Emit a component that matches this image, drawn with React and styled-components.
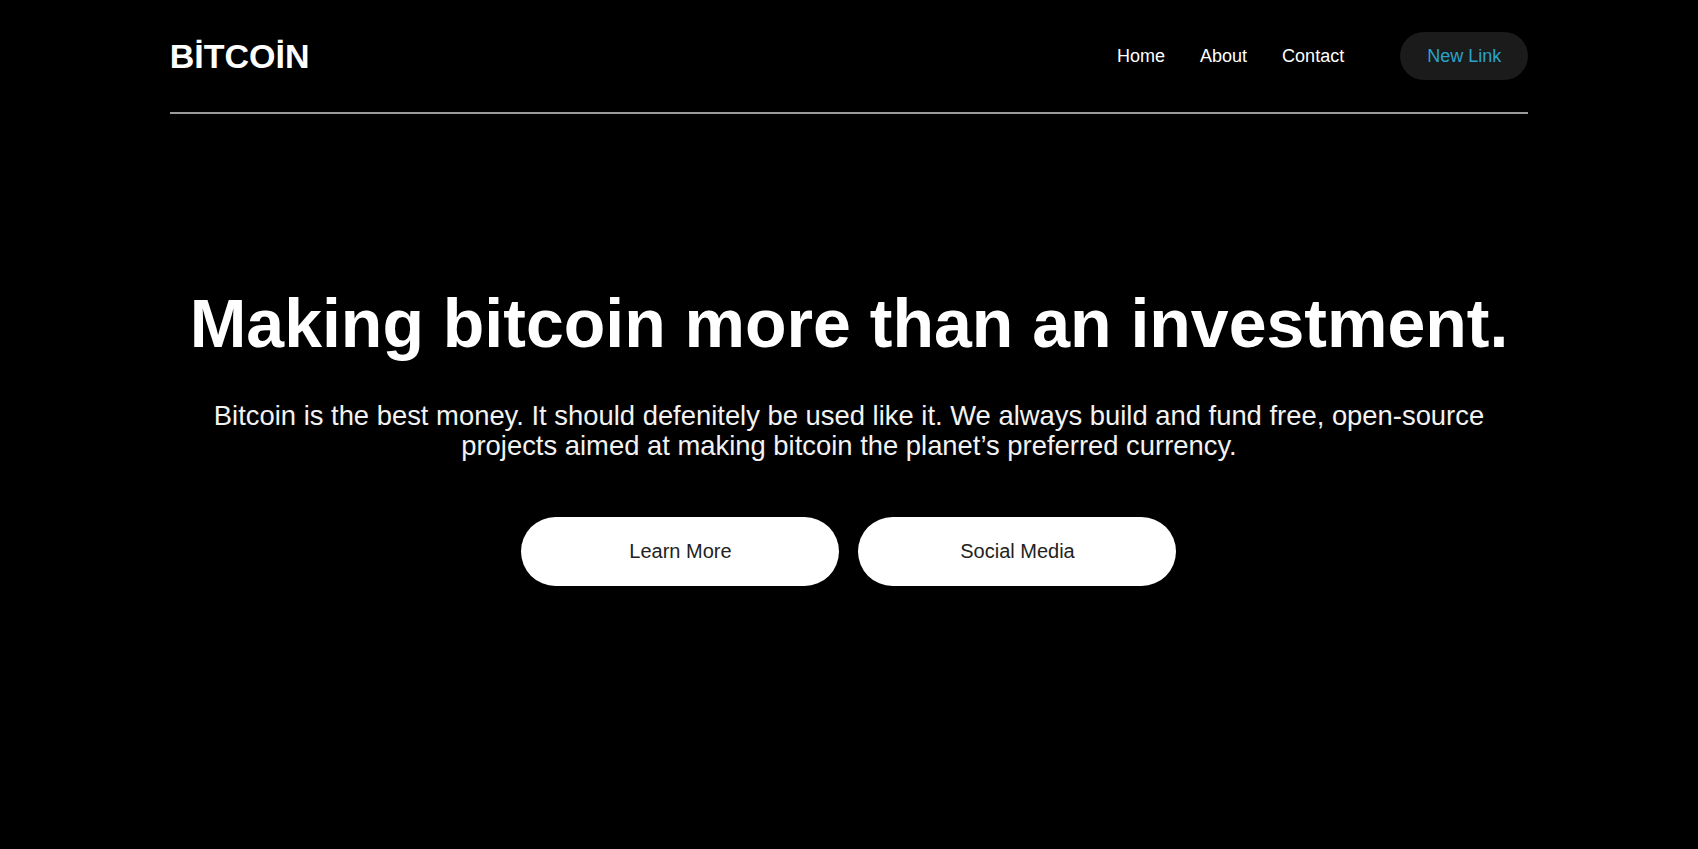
import React from 'react'
import styled, { createGlobalStyle } from 'styled-components'

const GlobalStyle = createGlobalStyle`
  html, body {
    margin: 0;
    padding: 0;
    background: #000;
    font-family: "Liberation Sans", Arial, sans-serif;
    color: #fff;
  }
`

const Page = styled.div`
  min-height: 100vh;
  background: #000;
`
const Container = styled.div`
  width: 80%;
  margin: 0 auto;
`
const HeaderBar = styled.header`
  display: flex;
  justify-content: space-between;
  align-items: center;
  padding: 32px 0;
  border-bottom: 2px solid #9a9a9a;
`
const Logo = styled.a`
  font-size: 34px;
  font-weight: 700;
  color: #fff;
  text-decoration: none;
  line-height: 1;
`
const Nav = styled.nav`
  display: flex;
  align-items: center;
`
const NavList = styled.ul`
  display: flex;
  gap: 35px;
  list-style: none;
  margin: 0;
  padding: 0;
`
const NavLink = styled.a`
  font-size: 18px;
  color: #fff;
  text-decoration: none;
`
const PillLink = styled.a`
  display: flex;
  align-items: center;
  height: 48px;
  padding: 0 27px;
  margin-left: 56px;
  border-radius: 24px;
  background: #1b1b1b;
  color: #2aa3cc;
  font-size: 18px;
  text-decoration: none;
`
const Hero = styled.section`
  display: flex;
  flex-direction: column;
  align-items: center;
  text-align: center;
  padding-top: 170px;
`
const Title = styled.h1`
  margin: 0;
  font-size: 68px;
  font-weight: 700;
  line-height: 78px;
`
const Lead = styled.p`
  margin: 39px 0 0;
  max-width: 1320px;
  font-size: 27.4px;
  line-height: 30px;
  color: #f2f2f2;
`
const Actions = styled.div`
  display: flex;
  gap: 19px;
  margin-top: 56px;
`
const ActionButton = styled.a`
  display: flex;
  align-items: center;
  justify-content: center;
  width: 318px;
  height: 69px;
  border-radius: 35px;
  background: #fff;
  color: #222;
  font-size: 20px;
  text-decoration: none;
`

const links = ['Home', 'About', 'Contact']

export default function App() {
  return (
    <Page>
      <GlobalStyle />
      <Container>
        <HeaderBar>
          <Logo href="#">BİTCOİN</Logo>
          <Nav>
            <NavList>
              {links.map((l) => (
                <li key={l}>
                  <NavLink href="#">{l}</NavLink>
                </li>
              ))}
            </NavList>
            <PillLink href="#">New Link</PillLink>
          </Nav>
        </HeaderBar>
        <Hero>
          <Title>Making bitcoin more than an investment.</Title>
          <Lead>
            Bitcoin is the best money. It should defenitely be used like it. We always build and fund
            free, open-source projects aimed at making bitcoin the planet’s preferred currency.
          </Lead>
          <Actions>
            <ActionButton href="#">Learn More</ActionButton>
            <ActionButton href="#">Social Media</ActionButton>
          </Actions>
        </Hero>
      </Container>
    </Page>
  )
}
